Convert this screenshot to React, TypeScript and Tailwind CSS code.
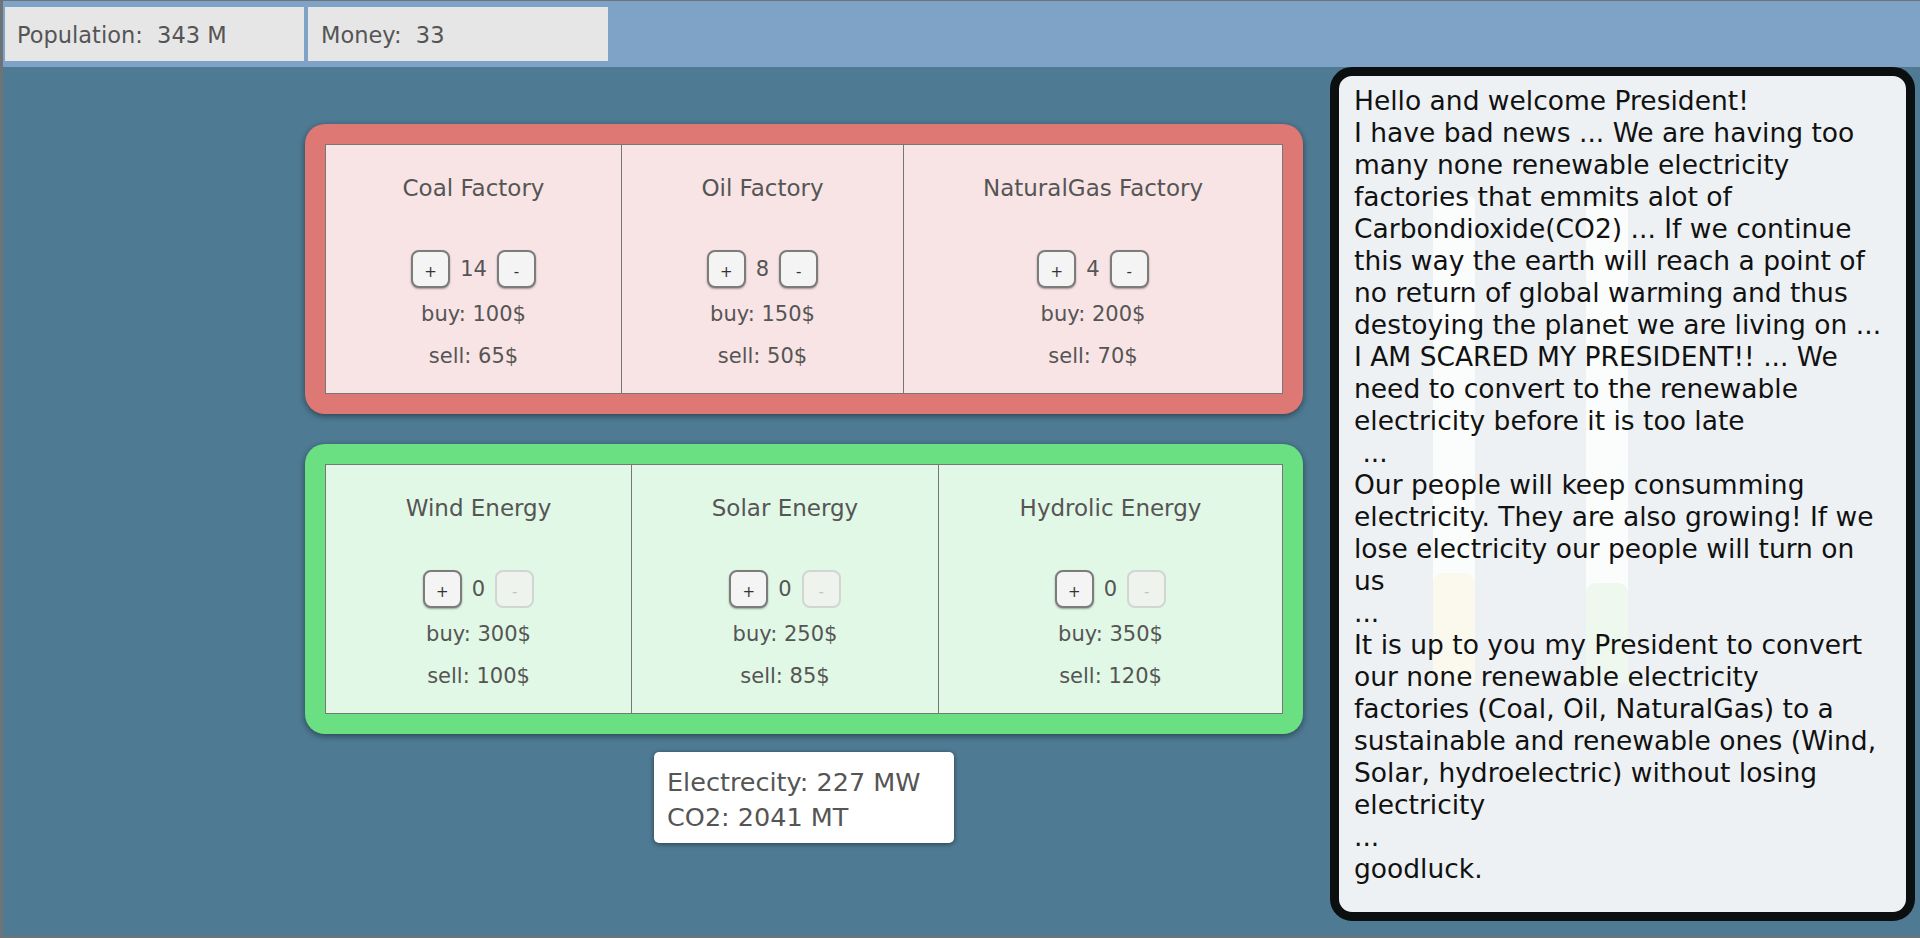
import React from "react";

type Plant = { name: string; count: number; buy: number; sell: number; w: string };

const dirty: Plant[] = [
  { name: "Coal Factory", count: 14, buy: 100, sell: 65, w: "w-[296px]" },
  { name: "Oil Factory", count: 8, buy: 150, sell: 50, w: "w-[282px]" },
  { name: "NaturalGas Factory", count: 4, buy: 200, sell: 70, w: "w-[378px]" },
];

const clean: Plant[] = [
  { name: "Wind Energy", count: 0, buy: 300, sell: 100, w: "w-[306px]" },
  { name: "Solar Energy", count: 0, buy: 250, sell: 85, w: "w-[307px]" },
  { name: "Hydrolic Energy", count: 0, buy: 350, sell: 120, w: "w-[343px]" },
];

// advisor message, one entry per rendered line
const speech = [
  "Hello and welcome President!",
  "I have bad news ... We are having too",
  "many none renewable electricity",
  "factories that emmits alot of",
  "Carbondioxide(CO2) ... If we continue",
  "this way the earth will reach a point of",
  "no return of global warming and thus",
  "destoying the planet we are living on ...",
  "I AM SCARED MY PRESIDENT!! ... We",
  "need to convert to the renewable",
  "electricity before it is too late",
  "\u00a0...",
  "Our people will keep consumming",
  "electricity. They are also growing! If we",
  "lose electricity our people will turn on",
  "us",
  "...",
  "It is up to you my President to convert",
  "our none renewable electricity",
  "factories (Coal, Oil, NaturalGas) to a",
  "sustainable and renewable ones (Wind,",
  "Solar, hydroelectric) without losing",
  "electricity",
  "...",
  "goodluck.",
];

function CountButton({ label, disabled }: { label: string; disabled?: boolean }) {
  return (
    <button
      disabled={disabled}
      className={
        disabled
          ? "w-[39px] h-[38px] rounded-[8px] border-2 border-[#d2d6d2] bg-[#eef3ee] text-[#c4c4c4] text-[15px] leading-none pt-[6px]"
          : "w-[39px] h-[38px] rounded-[8px] border-2 border-[#7c7c7c] bg-[#f4f4f4] text-[#333] text-[15px] leading-none pt-[6px] shadow-[0_1px_2px_rgba(0,0,0,0.35)]"
      }
    >
      {label}
    </button>
  );
}

function PlantCell({ p, last }: { p: Plant; last: boolean }) {
  return (
    <div className={`${p.w} h-full flex flex-col items-center text-[#555] ${last ? "" : "border-r border-[#777]"}`}>
      <div className="mt-[28px] text-[23px] leading-[30px]">{p.name}</div>
      <div className="mt-[47px] h-[38px] flex items-center gap-[10px]">
        <CountButton label="+" />
        <span className="text-[21px] leading-none">{p.count}</span>
        <CountButton label="-" disabled={p.count === 0} />
      </div>
      <div className="mt-[9px] text-[21px] leading-[34px]">buy: {p.buy}$</div>
      <div className="mt-[8px] text-[21px] leading-[34px]">sell: {p.sell}$</div>
    </div>
  );
}

function PlantCard({ plants, outer, inner }: { plants: Plant[]; outer: string; inner: string }) {
  return (
    <div className={`w-[998px] h-[290px] p-[20px] rounded-[20px] shadow-[0_2px_6px_rgba(0,0,0,0.45)] ${outer}`}>
      <div className={`h-full flex border border-[#777] ${inner}`}>
        {plants.map((p, i) => (
          <PlantCell key={p.name} p={p} last={i === plants.length - 1} />
        ))}
      </div>
    </div>
  );
}

export default function App() {
  return (
    <div className="w-[1920px] h-[938px] overflow-hidden relative flex flex-col bg-[#4e7a93] border-l-[3px] border-t border-b-2 border-[#6d7478] font-['DejaVu_Sans',sans-serif]">
      {/* top bar */}
      <div className="h-[66px] shrink-0 bg-[#7fa3c6] flex gap-[4px] pl-[2px] pt-[6px]">
        <div className="w-[299px] h-[54px] bg-[#e6e6e6] flex items-center pl-[12px] pt-[3px] text-[22.5px] text-[#555]">
          Population:&nbsp; 343 M
        </div>
        <div className="w-[300px] h-[54px] bg-[#e6e6e6] flex items-center pl-[13px] pt-[3px] text-[22.5px] text-[#555]">
          Money:&nbsp; 33
        </div>
      </div>

      {/* game board */}
      <div className="flex-1 flex flex-col items-center w-[998px] ml-[302px] pt-[57px]">
        <PlantCard plants={dirty} outer="bg-[#de7875]" inner="bg-[#f8e4e5]" />
        <div className="mt-[30px]">
          <PlantCard plants={clean} outer="bg-[#6be083]" inner="bg-[#e2f8e6]" />
        </div>
        <div className="mt-[18px] w-[300px] h-[91px] bg-white rounded-[5px] shadow-[0_1px_5px_rgba(0,0,0,0.5)] pl-[13px] pt-[13px] text-[25.5px] leading-[35px] text-[#555]">
          <div>Electrecity: 227 MW</div>
          <div>CO2: 2041 MT</div>
        </div>
      </div>

      {/* bottom scrollbar strip */}
      <div className="absolute left-[440px] bottom-[-2px] w-[47px] h-[2px] bg-[#8c9094]" />

      {/* advisor dialog */}
      <div className="absolute left-[1327px] top-[66px] w-[585px] h-[854px] rounded-[22px] border-[9px] border-[#0b0f0f] bg-[#eef1f4] overflow-hidden">
        <div className="absolute left-[94px] top-[121px] w-[42px] h-[486px] bg-[#fbfcfc] rounded-t-[4px]" />
        <div className="absolute left-[94px] top-[497px] w-[42px] h-[110px] bg-[#fbf9ee] rounded-t-[10px]" />
        <div className="absolute left-[247px] top-[127px] w-[42px] h-[480px] bg-[#fbfcfc] rounded-t-[4px]" />
        <div className="absolute left-[247px] top-[507px] w-[42px] h-[100px] bg-[#eef8ef] rounded-t-[10px]" />
        <div className="relative pl-[15px] pt-[9px] text-[26.5px] leading-[32px] text-[#111]">
          {speech.map((line, i) => (
            <div key={i} className="whitespace-nowrap">
              {line}
            </div>
          ))}
        </div>
      </div>
    </div>
  );
}
